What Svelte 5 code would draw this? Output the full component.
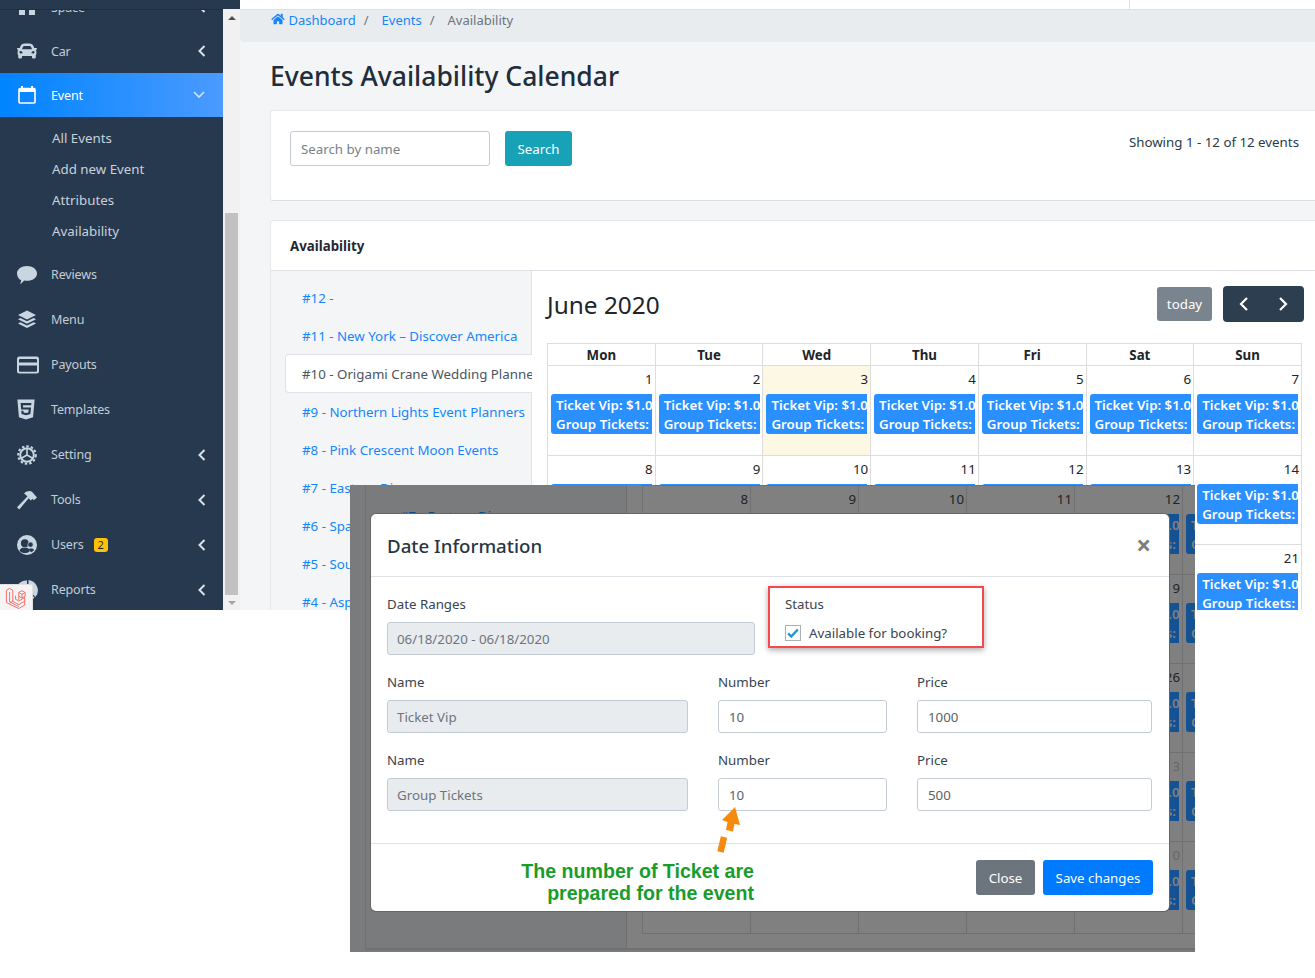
<script>
	const navTop = [{ label: 'Space', icon: 'space', arrow: true }, { label: 'Car', icon: 'car', arrow: true }]
	const subItems = ['All Events', 'Add new Event', 'Attributes', 'Availability']
	const navBottom = [
		{ label: 'Reviews', icon: 'comment' },
		{ label: 'Menu', icon: 'layers' },
		{ label: 'Payouts', icon: 'card' },
		{ label: 'Templates', icon: 'html5' },
		{ label: 'Setting', icon: 'gear', arrow: true },
		{ label: 'Tools', icon: 'hammer', arrow: true },
		{ label: 'Users', icon: 'users', arrow: true, badge: 2 },
		{ label: 'Reports', icon: 'pie', arrow: true }
	]
	const events = [
		'#12 -',
		'#11 - New York – Discover America',
		'#10 - Origami Crane Wedding Planners',
		'#9 - Northern Lights Event Planners',
		'#8 - Pink Crescent Moon Events',
		'#7 - Eastern Diner',
		'#6 - Sparkle Wedding Group',
		'#5 - Southern Charm Events',
		'#4 - Aspen Grove Planners'
	]
	const days = ['Mon', 'Tue', 'Wed', 'Thu', 'Fri', 'Sat', 'Sun']
	const weeks = [
		[1, 2, 3, 4, 5, 6, 7],
		[8, 9, 10, 11, 12, 13, 14],
		[15, 16, 17, 18, 19, 20, 21]
	]
	// the screenshot pasted behind the modal
	const dimWeeks = [
		[8, 9, 10, 11, 12, 13],
		[15, 16, 17, 18, 19, 20],
		[22, 23, 24, 25, 26, 27],
		[29, 30, 1, 2, 3, 4],
		[6, 7, 8, 9, 10, 11]
	]
	const tickets = [
		{ name: 'Ticket Vip', number: '10', price: '1000' },
		{ name: 'Group Tickets', number: '10', price: '500' }
	]
</script>

{#snippet icon(name)}
	{#if name === 'car'}
		<svg class="ico" viewBox="0 0 512 512" width="20" height="20"><path d="M499.99 176h-59.87l-16.64-41.6C406.38 91.63 365.57 64 319.5 64h-127c-46.06 0-86.88 27.63-103.99 70.4L71.87 176H12.01C4.2 176-1.53 183.34.37 190.91l6 24C7.7 220.25 12.5 224 18.01 224h20.07C24.65 235.73 16 252.78 16 272v48c0 16.12 6.16 30.67 16 41.93V416c0 17.67 14.33 32 32 32h32c17.67 0 32-14.33 32-32v-32h256v32c0 17.67 14.33 32 32 32h32c17.67 0 32-14.33 32-32v-54.07c9.84-11.25 16-25.8 16-41.93v-48c0-19.22-8.65-36.27-22.07-48H494c5.51 0 10.31-3.75 11.64-9.09l6-24c1.89-7.57-3.84-14.91-11.65-14.91zm-352.06-17.83c7.29-18.22 24.94-30.17 44.57-30.17h127c19.63 0 37.28 11.95 44.57 30.17L384 208H128l19.93-49.83zM96 319.8c-19.2 0-32-12.76-32-31.9S76.8 256 96 256s48 28.71 48 47.85-28.8 15.95-48 15.95zm320 0c-19.2 0-48 3.19-48-15.95S396.8 256 416 256s32 12.76 32 31.9-12.8 31.9-32 31.9z"/></svg>
	{:else if name === 'space'}
		<svg class="ico" viewBox="0 0 20 20" width="20" height="20"><path d="M2 2h6v16H2zM12 2h6v16h-6z"/></svg>
	{:else if name === 'calendar'}
		<svg class="ico white" viewBox="0 0 20 20" width="20" height="20"><path d="M4 1h2V4H4zM14 1h2V4h-2z"/><rect x="2" y="3.500" width="16" height="14.500" rx="1" fill="none" stroke="#fff" stroke-width="1.600"/><path d="M2 3.500h16v3.500H2z"/></svg>
	{:else if name === 'comment'}
		<svg class="ico" viewBox="0 0 20 20" width="20" height="20"><path d="M10 1c5.500 0 10 3.200 10 7.400s-4.500 7.400-10 7.400c-1 0-1.900-.1-2.800-.3C6 16.800 4.500 18.600 3 18.900c.7-.9 1.100-2.800 1.200-3.600C1.700 14 0 11.300 0 8.400 0 4.200 4.500 1 10 1z"/></svg>
	{:else if name === 'layers'}
		<svg class="ico" viewBox="0 0 20 20" width="20" height="20"><path d="M10 .5l9 4.500-9 4.500-9-4.500zM3.400 8L10 11.300 16.600 8 19 9.200l-9 4.500-9-4.500zM3.400 12.300L10 15.600l6.600-3.300 2.400 1.200-9 4.500-9-4.500z"/></svg>
	{:else if name === 'card'}
		<svg class="ico" viewBox="0 0 22 20" width="22" height="20"><path fill-rule="evenodd" d="M2.500 1.500h17A2.500 2.500 0 0 1 22 4v12a2.500 2.500 0 0 1-2.500 2.500h-17A2.500 2.500 0 0 1 0 16V4a2.500 2.500 0 0 1 2.500-2.500zM2 5v2.500h18V5a1 1 0 0 0-1-1H3a1 1 0 0 0-1 1zm0 5.500V16a.8.8 0 0 0 .8.8h16.400A.8.8 0 0 0 20 16v-5.500z"/></svg>
	{:else if name === 'html5'}
		<svg class="ico" viewBox="0 0 384 512" width="18" height="23"><path d="M0 32l34.900 395.800L191.500 480l157.600-52.200L384 32H0zm308.200 127.900H124.400l4.100 49.400h175.600l-13.600 148.400-97.900 27v.3h-1.100l-98.700-27.300-6-75.800h47.700L138 320l53.500 14.500 53.700-14.500 6-62.200H84.300L71.500 112.200h241.100l-4.400 47.700z"/></svg>
	{:else if name === 'gear'}
		<svg class="ico" viewBox="0 0 20 20" width="20" height="20"><circle cx="10" cy="10" r="6.800" fill="none" stroke="#c9d6e2" stroke-width="2"/><circle cx="10" cy="10" r="8.800" fill="none" stroke="#c9d6e2" stroke-width="2" stroke-dasharray="2.500 2"/><path d="M10 10L10 3.500M10 10l5.600 3.200M10 10l-5.600 3.200" stroke="#c9d6e2" stroke-width="1.600" fill="none"/></svg>
	{:else if name === 'hammer'}
		<svg class="ico" viewBox="0 0 20 20" width="20" height="20"><path d="M7 3.500C9.500 1 13 .5 15 1.800l5 5.700-3.200 2.800-1.300-1.500-1.800 1.600-2-2.200L2.200 19.500 0 17.200 10.400 6.400 9 5z"/></svg>
	{:else if name === 'users'}
		<svg class="ico" viewBox="0 0 20 20" width="20" height="20"><circle cx="10" cy="10" r="10"/><circle cx="7.800" cy="8.200" r="3.900" fill="#27394f"/><path d="M2.500 16c.4-2.700 2.500-3.600 5.300-3.600s4.600 1 5 3.800c-1.400 1.200-3 1.900-5 1.900-2.100 0-3.900-.8-5.300-2.100z" fill="#27394f"/><circle cx="13.500" cy="9.600" r="2.700" fill="#27394f" stroke="#c9d6e2" stroke-width=".7"/><path d="M11.500 14.500c1-1.400 4.300-1.600 5.600.2-.6 1-1.700 2-2.900 2.500z" fill="#27394f"/></svg>
	{:else if name === 'pie'}
		<svg class="ico" viewBox="0 0 22 22" width="22" height="22"><path d="M10 1.500v10l7.500 7A10.500 10.500 0 1 1 10 1.500z"/><path d="M11.500 1a10.500 10.500 0 0 1 7 17l-7-7z"/></svg>
	{/if}
{/snippet}

{#snippet navRow(item)}
	<a class="nav-item" href="#top">
		<span class="nav-icon">{@render icon(item.icon)}</span>
		<span class="nav-label">{item.label}</span>
		{#if item.badge}<span class="badge">{item.badge}</span>{/if}
		{#if item.arrow}
			<svg class="arrow" viewBox="0 0 8 12" width="8" height="12"><path d="M6.500 1L1.500 6l5 5" fill="none" stroke="currentColor" stroke-width="2"/></svg>
		{/if}
	</a>
{/snippet}

{#snippet booking()}
	<div class="booking">Ticket Vip: $1.00<br />Group Tickets: 10</div>
{/snippet}

<div class="page" id="top">
	<div class="shot">
		<aside class="sidebar">
			<nav class="nav">
				{#each navTop as item}
					{@render navRow(item)}
				{/each}
				<a class="nav-item active" href="#top">
					<span class="nav-icon">{@render icon('calendar')}</span>
					<span class="nav-label">Event</span>
					<svg class="arrow down" viewBox="0 0 12 8" width="12" height="8"><path d="M1 1l5 5 5-5" fill="none" stroke="currentColor" stroke-width="1.600"/></svg>
				</a>
				<ul class="subnav">
					{#each subItems as sub}
						<li>{sub}</li>
					{/each}
				</ul>
				{#each navBottom as item}
					{@render navRow(item)}
				{/each}
			</nav>
			<div class="brand-edge"></div>
			<div class="debugbar">
				<svg viewBox="0 0 24 24" width="22" height="22" fill="none" stroke="#f4645f" stroke-width="1" stroke-linejoin="round">
					<path d="M1.500 3.500l3.500-2 3.500 2v12l6.500 3.800 6.500-3.800v-4l-6.500 3.800-3.500-2V9.500"/>
					<path d="M1.500 3.500v13.500l13.500 6.500 6.500-3.800v-4M5 5.500V16l10 5.500M8.500 15.500L5 17.500"/>
					<path d="M15 6l3.500-2 3.500 2v4l-3.500 2-3.500-2zM15 6l3.500 2 3.500-2M18.500 8v4M15 10v4"/>
				</svg>
			</div>
		</aside>

		<div class="scrollbar">
			<span class="sb-arrow up"></span>
			<span class="sb-thumb"></span>
			<span class="sb-arrow dn"></span>
		</div>

		<main class="main">
			<header class="topbar"><span class="topbar-rule"></span></header>
			<ol class="crumbs">
				<li>
					<svg viewBox="0 0 576 512" width="14" height="12" fill="#1685fb"><path d="M280.370 148.260L96 300.110V464a16 16 0 0 0 16 16l112.060-.29a16 16 0 0 0 15.920-16V368a16 16 0 0 1 16-16h64a16 16 0 0 1 16 16v95.640a16 16 0 0 0 16 16.050L464 480a16 16 0 0 0 16-16V300L295.670 148.260a12.190 12.190 0 0 0-15.300 0zM571.600 251.470L488 182.560V44.050a12 12 0 0 0-12-12h-56a12 12 0 0 0-12 12v72.610L318.470 43a48 48 0 0 0-61 0L4.340 251.470a12 12 0 0 0-1.600 16.900l25.500 31A12 12 0 0 0 45.150 301l235.220-193.740a12.190 12.190 0 0 1 15.300 0L530.900 301a12 12 0 0 0 16.900-1.600l25.500-31a12 12 0 0 0-1.700-16.930z"/></svg>
					<a href="#top">Dashboard</a>
				</li>
				<li class="sep">/</li>
				<li><a href="#top">Events</a></li>
				<li class="sep">/</li>
				<li class="current">Availability</li>
			</ol>

			<div class="content">
				<h1>Events Availability Calendar</h1>

				<section class="card search-card">
					<div class="search">
						<input class="field search-input" placeholder="Search by name" />
						<button class="btn info">Search</button>
					</div>
					<div class="showing">Showing 1 - 12 of 12 events</div>
				</section>

				<section class="card avail-card">
					<div class="card-head">Availability</div>
					<div class="avail-body">
						<ul class="event-list">
							{#each events as ev, i}
								<li class:active={i === 2}>{ev}</li>
							{/each}
						</ul>
						<div class="calendar">
							<div class="cal-bar">
								<h2>June 2020</h2>
								<div class="cal-tools">
									<button class="btn today">today</button>
									<div class="pager">
										<svg viewBox="0 0 10 16" width="10" height="16"><path d="M8 2L2 8l6 6" fill="none" stroke="#fff" stroke-width="2.200"/></svg>
										<svg viewBox="0 0 10 16" width="10" height="16"><path d="M2 2l6 6-6 6" fill="none" stroke="#fff" stroke-width="2.200"/></svg>
									</div>
								</div>
							</div>
							<table class="cal">
								<thead>
									<tr>
										{#each days as d}<th>{d}</th>{/each}
									</tr>
								</thead>
								<tbody>
									{#each weeks as week}
										<tr>
											{#each week as n}
												<td class:today-cell={n === 3}>
													<div class="num">{n}</div>
													{@render booking()}
												</td>
											{/each}
										</tr>
									{/each}
								</tbody>
							</table>
						</div>
					</div>
				</section>
			</div>
		</main>
	</div>

	<!-- second screenshot pasted over the first one -->
	<div class="dim">
		<div class="dim-card">
			<div class="dim-list"><span>#7 - Eastern Diner</span></div>
			<table class="cal dim-cal">
				<tbody>
					{#each dimWeeks as week, w}
						<tr>
							{#each week as n, c}
								<td>
									<div class="num" class:muted={w === 3 ? c > 1 : w === 4}>{n}</div>
									{@render booking()}
								</td>
							{/each}
						</tr>
					{/each}
				</tbody>
			</table>
		</div>

		<div class="modal">
			<div class="modal-head">
				<h3>Date Information</h3>
				<span class="close">×</span>
			</div>
			<div class="modal-body">
				<div class="row top-row">
					<div class="group">
						<label for="range">Date Ranges</label>
						<input id="range" class="field" disabled value="06/18/2020 - 06/18/2020" />
					</div>
					<div class="group">
						<span class="label">Status</span>
						<div class="check">
							<span class="check-box">
								<svg viewBox="0 0 16 16" width="14" height="14"><path d="M2.500 8.500l3.500 3.500 7.500-8" fill="none" stroke="#1f97d4" stroke-width="2.800"/></svg>
							</span>
							Available for booking?
						</div>
					</div>
				</div>
				{#each tickets as t}
					<div class="row ticket-row">
						<div class="group">
							<span class="label">Name</span>
							<input class="field" disabled value={t.name} />
						</div>
						<div class="group">
							<span class="label">Number</span>
							<input class="field" value={t.number} />
						</div>
						<div class="group">
							<span class="label">Price</span>
							<input class="field" value={t.price} />
						</div>
					</div>
				{/each}
			</div>
			<div class="modal-foot">
				<button class="btn secondary">Close</button>
				<button class="btn primary">Save changes</button>
			</div>
		</div>
	</div>

	<!-- annotations drawn on top of the screenshot -->
	<div class="mark-box"></div>
	<svg class="mark-arrow" viewBox="0 0 30 60" width="30" height="60">
		<path d="M20 2L7 15l5.500 2-1.500 8 7 1.500 1.500-7.500 5.500 1z" fill="#f7890c"/>
		<path d="M9 32L5.500 47" stroke="#f7890c" stroke-width="6.500" fill="none"/>
	</svg>
	<div class="mark-note">The number of Ticket are<br />prepared for the event</div>
</div>

<style>
	:global(body) {
		margin: 0;
		background: #fff;
	}

	.page {
		position: relative;
		width: 1315px;
		height: 978px;
		overflow: hidden;
		font-family: 'Noto Sans', 'Open Sans', sans-serif;
		font-size: 13.300px;
		line-height: 21px;
		color: #212529;
	}

	a {
		color: #1685fb;
		text-decoration: none;
	}

	ul,
	ol {
		list-style: none;
		margin: 0;
		padding: 0;
	}

	.shot {
		display: flex;
		height: 610px;
		overflow: hidden;
	}

	/* sidebar */
	.sidebar {
		position: relative;
		flex: 0 0 223px;
		background: #27394f;
		overflow: hidden;
	}

	.nav {
		margin-top: -15px;
	}

	.nav-item {
		display: flex;
		align-items: center;
		height: 44px;
		padding-left: 17px;
		color: #c3ccd6;
	}

	.nav-label {
		font-size: 12.500px;
		letter-spacing: -0.15px;
	}

	.subnav ~ .nav-item {
		height: 45px;
	}

	.nav-item.active {
		background: linear-gradient(to right, #0084ff, #4b9aff);
		color: #fff;
	}

	.nav-icon {
		display: flex;
		align-items: center;
		width: 34px;
		flex: none;
	}

	.ico {
		fill: #c9d6e2;
	}

	.ico.white {
		fill: #fff;
	}

	.arrow {
		position: absolute;
		left: 198px;
		color: #dbe1e8;
	}

	.arrow.down {
		left: 193px;
		color: #d5e4fb;
	}

	.badge {
		margin-left: 10px;
		width: 14px;
		height: 14px;
		border-radius: 3px;
		background: #ffc107;
		color: #212529;
		font-size: 11px;
		line-height: 14px;
		text-align: center;
	}

	.subnav {
		padding: 6px 0 5px;
	}

	.subnav li {
		height: 31px;
		line-height: 31px;
		padding-left: 52px;
		color: #c9d1da;
	}

	.brand-edge {
		position: absolute;
		top: 0;
		left: 0;
		width: 100%;
		height: 9px;
		background: #27394f;
		border-bottom: 1px solid #1f2e41;
	}

	.debugbar {
		position: absolute;
		left: 0;
		bottom: 0;
		display: flex;
		align-items: center;
		justify-content: center;
		width: 32px;
		height: 25px;
		background: #f5f5f5;
		border-top: 1px solid #e0e0e0;
		border-right: 1px solid #e0e0e0;
	}

	/* browser scrollbar */
	.scrollbar {
		flex: 0 0 17px;
		display: flex;
		flex-direction: column;
		align-items: center;
		background: #f1f1f1;
		border-top: 9px solid #27394f;
		position: relative;
	}

	.sb-thumb {
		position: absolute;
		top: 204px;
		left: 2px;
		width: 13px;
		height: 382px;
		background: #c1c1c1;
	}

	.sb-arrow {
		position: absolute;
		left: 5px;
		width: 0;
		height: 0;
		border-left: 4px solid transparent;
		border-right: 4px solid transparent;
	}

	.sb-arrow.up {
		top: 7px;
		border-bottom: 4px solid #505050;
	}

	.sb-arrow.dn {
		bottom: 5px;
		border-top: 4px solid #a3a3a3;
	}

	/* main column */
	.main {
		flex: 1;
		min-width: 0;
		background: #f4f5f7;
		overflow: hidden;
	}

	.topbar {
		position: relative;
		height: 9px;
		background: #fff;
		border-bottom: 1px solid #dfdfdf;
	}

	.topbar-rule {
		position: absolute;
		left: 889px;
		top: 0;
		height: 9px;
		border-left: 1px solid #dfdfdf;
	}

	.crumbs {
		display: flex;
		align-items: flex-start;
		height: 32px;
		padding-left: 31px;
		background: #e9ecef;
		border-bottom-left-radius: 4px;
		font-size: 13px;
		line-height: 21px;
	}

	.crumbs .sep {
		margin: 0 13px 0 8px;
		color: #6c757d;
	}

	.crumbs .current {
		color: #6c757d;
	}

	.content {
		padding-left: 30px;
		margin-right: -4px;
	}

	h1 {
		margin: 17px 0 17px;
		font-size: 26.500px;
		line-height: 34px;
		font-weight: 500;
		color: #212d3a;
	}

	.card {
		background: #fff;
		border: 1px solid #e6e8eb;
		border-radius: 3px;
	}

	.search-card {
		display: flex;
		justify-content: space-between;
		height: 91px;
		box-sizing: border-box;
		padding: 20px 19px;
		margin-bottom: 19px;
		border-bottom-color: #dcdfe2;
	}

	.search {
		display: flex;
		gap: 15px;
	}

	.field {
		box-sizing: border-box;
		width: 100%;
		height: 33px;
		padding: 0 10px;
		border: 1px solid #c4cbd4;
		border-radius: 3px;
		background: #fff;
		font: inherit;
		color: #5a6268;
		outline: none;
	}

	.field:disabled {
		padding-left: 9px;
		background: #e9ecef;
		color: #6c757d;
	}

	.search-input {
		width: 200px;
		height: 35px;
	}

	.search-input::placeholder {
		color: #78818a;
	}

	.btn {
		box-sizing: border-box;
		height: 35px;
		padding: 1px 0 0;
		border: 0;
		border-radius: 3px;
		font: inherit;
		color: #fff;
		white-space: nowrap;
	}

	.btn.info {
		width: 67px;
		background: #17a2b8;
	}

	.btn.secondary {
		width: 59px;
		background: #6c757d;
	}

	.btn.primary {
		width: 110px;
		background: #007bff;
	}

	.showing {
		padding-top: 1px;
		color: #2b3a4a;
	}

	.card-head {
		height: 50px;
		box-sizing: border-box;
		padding: 15px 19px 0;
		border-bottom: 1px solid #dfe3e8;
		font-weight: 700;
		color: #1f2933;
	}

	.avail-body {
		display: flex;
	}

	.event-list {
		box-sizing: border-box;
		flex: 0 0 261px;
		min-width: 0;
		height: 400px;
		padding-top: 9px;
		background: #f4f5f7;
		border-right: 1px solid #dfe3e8;
	}

	.event-list li {
		box-sizing: border-box;
		height: 38px;
		margin-left: 14px;
		margin-right: -1px;
		padding: 8px 0 0 17px;
		color: #1685fb;
		white-space: nowrap;
		overflow: hidden;
	}

	.event-list li.active {
		position: relative;
		height: 39px;
		margin-top: -2px;
		margin-bottom: 1px;
		padding: 9px 0 0 16px;
		background: #fff;
		border: 1px solid #dfe3e8;
		border-right: 0;
		border-radius: 4px 0 0 4px;
		color: #4a5560;
	}

	.calendar {
		padding-left: 15px;
	}

	.cal-bar {
		display: flex;
		justify-content: space-between;
		align-items: center;
		box-sizing: border-box;
		width: 757px;
		height: 72px;
		padding-bottom: 6px;
	}

	.cal-bar h2 {
		margin: 0;
		font-size: 24.400px;
		font-weight: 400;
		color: #212529;
	}

	.cal-tools {
		display: flex;
		align-items: center;
		gap: 11px;
	}

	.btn.today {
		width: 55px;
		height: 34px;
		padding: 0;
		background: #7a848e;
	}

	.pager {
		display: flex;
		align-items: center;
		justify-content: space-between;
		box-sizing: border-box;
		width: 81px;
		height: 36px;
		padding: 0 16px;
		background: #2c3e50;
		border-radius: 4px;
	}

	.cal {
		table-layout: fixed;
		width: 755px;
		border-collapse: collapse;
	}

	.cal th {
		height: 21px;
		padding: 1px 0 0;
		box-sizing: border-box;
		border: 1px solid #ddd;
		font-weight: 700;
		line-height: 20px;
		color: #212529;
	}

	.cal td {
		height: 89px;
		padding: 3px 2px 0 3px;
		border: 1px solid #ddd;
		vertical-align: top;
		box-sizing: border-box;
	}

	.cal thead + tbody tr:first-child td {
		height: 90px;
	}

	.cal td.today-cell {
		background: #fcf8e3;
	}

	.num {
		height: 25px;
		text-align: right;
	}

	.booking {
		box-sizing: border-box;
		height: 40px;
		width: 101px;
		padding: 2px 0 0 5px;
		background: #2a8fff;
		border-radius: 3px 0 0 3px;
		color: #fff;
		font-weight: 600;
		line-height: 19px;
		white-space: nowrap;
		overflow: hidden;
	}

	/* pasted dimmed screenshot */
	.dim {
		position: absolute;
		left: 350px;
		top: 485px;
		width: 845px;
		height: 467px;
		background: #7a7b7d;
		overflow: hidden;
	}

	.dim-card {
		display: flex;
		box-sizing: border-box;
		margin-left: 15px;
		width: 850px;
		height: 465px;
		background: #808080;
		border-left: 1px solid #6f7072;
		border-bottom: 2px solid #6f7072;
	}

	.dim-list {
		box-sizing: border-box;
		flex: 0 0 261px;
		height: 100%;
		padding: 21px 0 0 34px;
		margin-right: 15px;
		background: #7a7b7d;
		border-right: 1px solid #6f7072;
		color: #0d4a8c;
		white-space: nowrap;
	}

	.dim-cal {
		flex: none;
		width: 649px;
		height: 448px;
	}

	.dim-cal td {
		border-color: #6f7072;
		color: #222;
	}

	.dim-cal tr:last-child td {
		height: 92px;
	}

	.dim-cal .num.muted {
		color: #66676a;
	}

	.dim-cal .booking {
		background: #155293;
		color: #808080;
	}

	.modal {
		position: absolute;
		left: 21px;
		top: 29px;
		box-sizing: border-box;
		width: 798px;
		height: 397px;
		background: #fff;
		border-radius: 5px;
		box-shadow: 0 0 0 1px #666;
	}

	.modal-head {
		display: flex;
		justify-content: space-between;
		align-items: center;
		box-sizing: border-box;
		height: 63px;
		padding: 0 16px;
		border-bottom: 1px solid #dee2e6;
	}

	.modal-head h3 {
		margin: 0;
		font-size: 18.700px;
		font-weight: 500;
		color: #2a3644;
	}

	.close {
		font-size: 26px;
		font-weight: 700;
		color: #7d7d7d;
		margin-right: 2px;
	}

	.modal-body {
		box-sizing: border-box;
		height: 267px;
		padding: 16px;
		border-bottom: 1px solid #dee2e6;
	}

	.row {
		display: grid;
		column-gap: 30px;
		margin-bottom: 16px;
	}

	.top-row {
		grid-template-columns: 368px 1fr;
	}

	.ticket-row {
		grid-template-columns: 301px 169px 235px;
	}

	label,
	.label {
		display: block;
		padding-top: 1px;
		margin-bottom: 7px;
		color: #3a444e;
	}

	.check {
		display: flex;
		align-items: center;
		gap: 8px;
		height: 33px;
		margin-top: -5px;
		color: #3a444e;
	}

	.check-box {
		display: flex;
		align-items: center;
		justify-content: center;
		box-sizing: border-box;
		width: 16px;
		height: 16px;
		border: 1px solid #a9b0b8;
		margin-top: -1px;
	}

	.modal-foot {
		display: flex;
		justify-content: flex-end;
		gap: 8px;
		padding: 16px;
	}

	/* annotations */
	.mark-box {
		position: absolute;
		left: 768px;
		top: 586px;
		box-sizing: border-box;
		width: 216px;
		height: 62px;
		border: 2px solid #f4484c;
		box-shadow: 0 2px 6px rgba(0, 0, 0, 0.35);
	}

	.mark-arrow {
		position: absolute;
		left: 715px;
		top: 805px;
	}

	.mark-note {
		position: absolute;
		left: 450px;
		top: 860px;
		width: 304px;
		font-family: 'Liberation Sans', Arial, sans-serif;
		font-size: 19.600px;
		line-height: 22px;
		font-weight: 700;
		color: #1a9c2a;
		text-align: right;
	}
</style>
